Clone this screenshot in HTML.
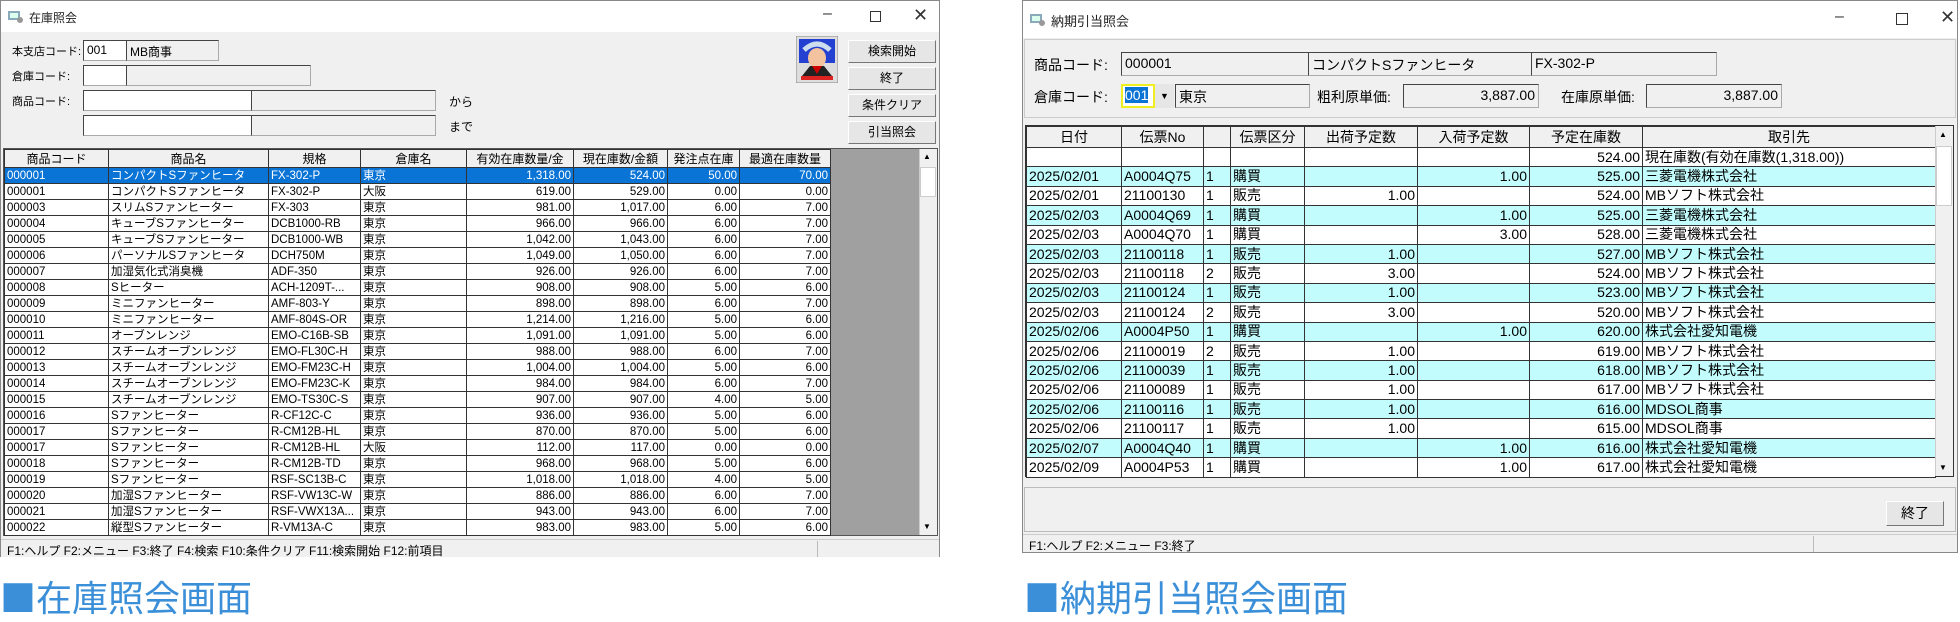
<!DOCTYPE html>
<html><head><meta charset="utf-8"><style>
*{box-sizing:border-box;margin:0;padding:0}
body{width:1960px;height:616px;background:#fff;position:relative;overflow:hidden;font-family:"Liberation Sans","Noto Sans CJK JP",sans-serif;color:#000}
.a{position:absolute}
.win{position:absolute;background:#f0f0f0;border:1px solid #888}
.tb{position:absolute;left:0;right:0;top:0;background:#fff}
.tt{position:absolute;font-size:12px;color:#222}
.ctl{position:absolute;font-size:16px;color:#333}
.box{position:absolute;border:1px solid #444;border-right-color:#aaa;border-bottom-color:#aaa;background:#f0f0f0;font-size:12px;padding:2px 3px;white-space:nowrap;overflow:hidden}
.w{background:#fff}
.lbl{position:absolute;font-size:12px;white-space:nowrap}
.btn{position:absolute;background:#e6e6e6;border:1px solid #fff;border-right-color:#777;border-bottom-color:#777;font-size:12px;text-align:center;line-height:21px}
table{border-collapse:collapse;table-layout:fixed;position:absolute}
td{border:1px solid #333;white-space:nowrap;overflow:hidden;padding:0 2px}
.g1 td{font-size:11.5px;height:16px;line-height:14px}
.g2 td{font-size:14px;height:19.4px;line-height:17px}
th{border:1px solid #333;font-weight:normal;background:#f0f0f0;white-space:nowrap;overflow:hidden}
.g1 th{font-size:12px;height:18px}
.g2 th{font-size:14px;height:20px}
.r{text-align:right}
.sel td{background:#0a74d6;color:#fff}
.cy td{background:#c2fcfc}
.sb{position:absolute;background:#f0f0f0;border-left:1px solid #ccc}
.st{position:absolute;font-size:12px;border-top:1px solid #ccc;background:#f0f0f0;padding:2px 6px}
.h{position:absolute;font-size:36px;color:#3a8fd8;font-family:"Noto Sans CJK JP",sans-serif;line-height:38px}
</style></head><body>

<!-- LEFT WINDOW -->
<div class="win" style="left:0;top:0;width:940px;height:557px">
 <div class="tb" style="height:31px"></div>
 <svg class="a" style="left:7px;top:9px" width="16" height="14"><rect x="0" y="1" width="12" height="9" fill="#8ab" /><rect x="2" y="3" width="8" height="5" fill="#dfe"/><circle cx="12" cy="10" r="3" fill="#999"/></svg>
 <div class="tt" style="left:28px;top:8px">在庫照会</div>
 <div class="ctl" style="left:822px;top:4px">–</div>
 <div class="a" style="left:869px;top:10px;width:11px;height:11px;border:1px solid #333"></div>
 <div class="ctl" style="left:912px;top:4px;font-size:18px">✕</div>

 <div class="lbl" style="left:11px;top:42px;font-size:11px">本支店コード:</div>
 <div class="box w" style="left:82px;top:39px;width:44px;height:21px">001</div>
 <div class="box" style="left:125px;top:39px;width:93px;height:21px">MB商事</div>
 <div class="lbl" style="left:11px;top:67px;font-size:11px">倉庫コード:</div>
 <div class="box w" style="left:82px;top:64px;width:44px;height:21px"></div>
 <div class="box" style="left:125px;top:64px;width:185px;height:21px"></div>
 <div class="lbl" style="left:11px;top:92px;font-size:11px">商品コード:</div>
 <div class="box w" style="left:82px;top:89px;width:169px;height:21px"></div>
 <div class="box" style="left:250px;top:89px;width:185px;height:21px"></div>
 <div class="box w" style="left:82px;top:114px;width:169px;height:21px"></div>
 <div class="box" style="left:250px;top:114px;width:185px;height:21px"></div>
 <div class="lbl" style="left:448px;top:92px">から</div>
 <div class="lbl" style="left:448px;top:117px">まで</div>

 <svg class="a" style="left:795px;top:35px" width="42" height="47"><rect x="0" y="0" width="42" height="47" fill="#ddd" stroke="#888"/><rect x="3" y="3" width="36" height="24" fill="#2340d0"/><ellipse cx="21" cy="22" rx="9" ry="10" fill="#f3c3a0"/><path d="M8 14 Q21 2 34 14" stroke="#cde" stroke-width="5" fill="none"/><path d="M6 40 L14 30 L28 30 L36 40 Z" fill="#222"/><path d="M16 30 L21 38 L26 30Z" fill="#c00"/><rect x="5" y="40" width="32" height="4" fill="#d22"/></svg>
 <div class="btn" style="left:847px;top:39px;width:88px;height:23px">検索開始</div>
 <div class="btn" style="left:847px;top:66px;width:88px;height:23px">終了</div>
 <div class="btn" style="left:847px;top:93px;width:88px;height:23px">条件クリア</div>
 <div class="btn" style="left:847px;top:120px;width:88px;height:23px">引当照会</div>

 <div class="a" style="left:2px;top:147px;width:935px;height:388px;background:#a0a0a0;border:1px solid #555"></div>
 <table class="g1" style="left:3px;top:148px;width:826px;background:#fff">
  <colgroup><col style="width:104px"><col style="width:160px"><col style="width:92px"><col style="width:106px"><col style="width:107px"><col style="width:94px"><col style="width:72px"><col style="width:91px"></colgroup>
  <tr><th>商品コード</th><th>商品名</th><th>規格</th><th>倉庫名</th><th>有効在庫数量/金</th><th>現在庫数/金額</th><th>発注点在庫</th><th>最適在庫数量</th></tr>
  <tr class="sel"><td>000001</td><td>コンパクトSファンヒータ</td><td>FX-302-P</td><td>東京</td><td class="r">1,318.00</td><td class="r">524.00</td><td class="r">50.00</td><td class="r">70.00</td></tr>
  <tr><td>000001</td><td>コンパクトSファンヒータ</td><td>FX-302-P</td><td>大阪</td><td class="r">619.00</td><td class="r">529.00</td><td class="r">0.00</td><td class="r">0.00</td></tr>
  <tr><td>000003</td><td>スリムSファンヒーター</td><td>FX-303</td><td>東京</td><td class="r">981.00</td><td class="r">1,017.00</td><td class="r">6.00</td><td class="r">7.00</td></tr>
  <tr><td>000004</td><td>キューブSファンヒーター</td><td>DCB1000-RB</td><td>東京</td><td class="r">966.00</td><td class="r">966.00</td><td class="r">6.00</td><td class="r">7.00</td></tr>
  <tr><td>000005</td><td>キューブSファンヒーター</td><td>DCB1000-WB</td><td>東京</td><td class="r">1,042.00</td><td class="r">1,043.00</td><td class="r">6.00</td><td class="r">7.00</td></tr>
  <tr><td>000006</td><td>パーソナルSファンヒータ</td><td>DCH750M</td><td>東京</td><td class="r">1,049.00</td><td class="r">1,050.00</td><td class="r">6.00</td><td class="r">7.00</td></tr>
  <tr><td>000007</td><td>加湿気化式消臭機</td><td>ADF-350</td><td>東京</td><td class="r">926.00</td><td class="r">926.00</td><td class="r">6.00</td><td class="r">7.00</td></tr>
  <tr><td>000008</td><td>Sヒーター</td><td>ACH-1209T-...</td><td>東京</td><td class="r">908.00</td><td class="r">908.00</td><td class="r">5.00</td><td class="r">6.00</td></tr>
  <tr><td>000009</td><td>ミニファンヒーター</td><td>AMF-803-Y</td><td>東京</td><td class="r">898.00</td><td class="r">898.00</td><td class="r">6.00</td><td class="r">7.00</td></tr>
  <tr><td>000010</td><td>ミニファンヒーター</td><td>AMF-804S-OR</td><td>東京</td><td class="r">1,214.00</td><td class="r">1,216.00</td><td class="r">5.00</td><td class="r">6.00</td></tr>
  <tr><td>000011</td><td>オーブンレンジ</td><td>EMO-C16B-SB</td><td>東京</td><td class="r">1,091.00</td><td class="r">1,091.00</td><td class="r">5.00</td><td class="r">6.00</td></tr>
  <tr><td>000012</td><td>スチームオーブンレンジ</td><td>EMO-FL30C-H</td><td>東京</td><td class="r">988.00</td><td class="r">988.00</td><td class="r">6.00</td><td class="r">7.00</td></tr>
  <tr><td>000013</td><td>スチームオーブンレンジ</td><td>EMO-FM23C-H</td><td>東京</td><td class="r">1,004.00</td><td class="r">1,004.00</td><td class="r">5.00</td><td class="r">6.00</td></tr>
  <tr><td>000014</td><td>スチームオーブンレンジ</td><td>EMO-FM23C-K</td><td>東京</td><td class="r">984.00</td><td class="r">984.00</td><td class="r">6.00</td><td class="r">7.00</td></tr>
  <tr><td>000015</td><td>スチームオーブンレンジ</td><td>EMO-TS30C-S</td><td>東京</td><td class="r">907.00</td><td class="r">907.00</td><td class="r">4.00</td><td class="r">5.00</td></tr>
  <tr><td>000016</td><td>Sファンヒーター</td><td>R-CF12C-C</td><td>東京</td><td class="r">936.00</td><td class="r">936.00</td><td class="r">5.00</td><td class="r">6.00</td></tr>
  <tr><td>000017</td><td>Sファンヒーター</td><td>R-CM12B-HL</td><td>東京</td><td class="r">870.00</td><td class="r">870.00</td><td class="r">5.00</td><td class="r">6.00</td></tr>
  <tr><td>000017</td><td>Sファンヒーター</td><td>R-CM12B-HL</td><td>大阪</td><td class="r">112.00</td><td class="r">117.00</td><td class="r">0.00</td><td class="r">0.00</td></tr>
  <tr><td>000018</td><td>Sファンヒーター</td><td>R-CM12B-TD</td><td>東京</td><td class="r">968.00</td><td class="r">968.00</td><td class="r">5.00</td><td class="r">6.00</td></tr>
  <tr><td>000019</td><td>Sファンヒーター</td><td>RSF-SC13B-C</td><td>東京</td><td class="r">1,018.00</td><td class="r">1,018.00</td><td class="r">4.00</td><td class="r">5.00</td></tr>
  <tr><td>000020</td><td>加湿Sファンヒーター</td><td>RSF-VW13C-W</td><td>東京</td><td class="r">886.00</td><td class="r">886.00</td><td class="r">6.00</td><td class="r">7.00</td></tr>
  <tr><td>000021</td><td>加湿Sファンヒーター</td><td>RSF-VWX13A...</td><td>東京</td><td class="r">943.00</td><td class="r">943.00</td><td class="r">6.00</td><td class="r">7.00</td></tr>
  <tr><td>000022</td><td>縦型Sファンヒーター</td><td>R-VM13A-C</td><td>東京</td><td class="r">983.00</td><td class="r">983.00</td><td class="r">5.00</td><td class="r">6.00</td></tr>
 </table>
 <div class="sb" style="left:918px;top:148px;width:18px;height:386px"></div>
 <div class="a" style="left:922px;top:151px;font-size:8px">▲</div>
 <div class="a" style="left:919px;top:166px;width:16px;height:30px;background:#fff;border:1px solid #ccc"></div>
 <div class="a" style="left:922px;top:521px;font-size:8px">▼</div>
 <div class="st" style="left:0;top:538px;width:938px;height:18px">F1:ヘルプ F2:メニュー F3:終了 F4:検索 F10:条件クリア F11:検索開始 F12:前項目</div>
 <div class="a" style="left:816px;top:540px;width:1px;height:16px;background:#bbb"></div>
</div>
<div class="h" style="left:0;top:577px">■在庫照会画面</div>

<!-- RIGHT WINDOW -->
<div class="win" style="left:1022px;top:0;width:936px;height:553px">
 <div class="tb" style="height:37px"></div>
 <svg class="a" style="left:7px;top:12px" width="16" height="14"><rect x="0" y="1" width="12" height="9" fill="#8ab" /><rect x="2" y="3" width="8" height="5" fill="#dfe"/><circle cx="12" cy="10" r="3" fill="#999"/></svg>
 <div class="tt" style="left:28px;top:10px;font-size:13px">納期引当照会</div>
 <div class="ctl" style="left:812px;top:7px">–</div>
 <div class="a" style="left:873px;top:12px;width:12px;height:12px;border:1px solid #333"></div>
 <div class="ctl" style="left:917px;top:6px;font-size:18px">✕</div>

 <div class="a" style="left:1px;top:38px;width:932px;height:79px;border:1px solid #ccc"></div>
 <div class="lbl" style="left:11px;top:54px;font-size:14px">商品コード:</div>
 <div class="box" style="left:98px;top:51px;width:188px;height:24px;font-size:14px">000001</div>
 <div class="box" style="left:285px;top:51px;width:224px;height:24px;font-size:14px">コンパクトSファンヒータ</div>
 <div class="box" style="left:508px;top:51px;width:186px;height:24px;font-size:14px">FX-302-P</div>
 <div class="lbl" style="left:11px;top:86px;font-size:14px">倉庫コード:</div>
 <div class="a" style="left:98px;top:83px;width:34px;height:24px;border:2px solid #ee2;background:#fff;font-size:14px;padding:1px 2px"><span style="background:#0a74d6;color:#fff">001</span></div>
 <div class="a" style="left:132px;top:83px;width:19px;height:24px;background:#e6e6e6;font-size:9px;text-align:center;line-height:24px">▼</div>
 <div class="box" style="left:152px;top:83px;width:135px;height:24px;font-size:14px">東京</div>
 <div class="lbl" style="left:294px;top:86px;font-size:14px">粗利原単価:</div>
 <div class="box r" style="left:380px;top:83px;width:136px;height:24px;font-size:14px">3,887.00</div>
 <div class="lbl" style="left:538px;top:86px;font-size:14px">在庫原単価:</div>
 <div class="box r" style="left:623px;top:83px;width:136px;height:24px;font-size:14px">3,887.00</div>

 <div class="a" style="left:2px;top:124px;width:929px;height:352px;background:#fff;border:1px solid #333"></div>
 <table class="g2" style="left:3px;top:125px;width:909px;background:#fff">
  <colgroup><col style="width:95px"><col style="width:82px"><col style="width:27px"><col style="width:74px"><col style="width:113px"><col style="width:112px"><col style="width:113px"><col style="width:293px"></colgroup>
  <tr><th>日付</th><th>伝票No</th><th></th><th>伝票区分</th><th>出荷予定数</th><th>入荷予定数</th><th>予定在庫数</th><th>取引先</th></tr>
  <tr><td></td><td></td><td></td><td></td><td></td><td></td><td class="r">524.00</td><td>現在庫数(有効在庫数(1,318.00))</td></tr>
  <tr class="cy"><td>2025/02/01</td><td>A0004Q75</td><td>1</td><td>購買</td><td></td><td class="r">1.00</td><td class="r">525.00</td><td>三菱電機株式会社</td></tr>
  <tr><td>2025/02/01</td><td>21100130</td><td>1</td><td>販売</td><td class="r">1.00</td><td></td><td class="r">524.00</td><td>MBソフト株式会社</td></tr>
  <tr class="cy"><td>2025/02/03</td><td>A0004Q69</td><td>1</td><td>購買</td><td></td><td class="r">1.00</td><td class="r">525.00</td><td>三菱電機株式会社</td></tr>
  <tr><td>2025/02/03</td><td>A0004Q70</td><td>1</td><td>購買</td><td></td><td class="r">3.00</td><td class="r">528.00</td><td>三菱電機株式会社</td></tr>
  <tr class="cy"><td>2025/02/03</td><td>21100118</td><td>1</td><td>販売</td><td class="r">1.00</td><td></td><td class="r">527.00</td><td>MBソフト株式会社</td></tr>
  <tr><td>2025/02/03</td><td>21100118</td><td>2</td><td>販売</td><td class="r">3.00</td><td></td><td class="r">524.00</td><td>MBソフト株式会社</td></tr>
  <tr class="cy"><td>2025/02/03</td><td>21100124</td><td>1</td><td>販売</td><td class="r">1.00</td><td></td><td class="r">523.00</td><td>MBソフト株式会社</td></tr>
  <tr><td>2025/02/03</td><td>21100124</td><td>2</td><td>販売</td><td class="r">3.00</td><td></td><td class="r">520.00</td><td>MBソフト株式会社</td></tr>
  <tr class="cy"><td>2025/02/06</td><td>A0004P50</td><td>1</td><td>購買</td><td></td><td class="r">1.00</td><td class="r">620.00</td><td>株式会社愛知電機</td></tr>
  <tr><td>2025/02/06</td><td>21100019</td><td>2</td><td>販売</td><td class="r">1.00</td><td></td><td class="r">619.00</td><td>MBソフト株式会社</td></tr>
  <tr class="cy"><td>2025/02/06</td><td>21100039</td><td>1</td><td>販売</td><td class="r">1.00</td><td></td><td class="r">618.00</td><td>MBソフト株式会社</td></tr>
  <tr><td>2025/02/06</td><td>21100089</td><td>1</td><td>販売</td><td class="r">1.00</td><td></td><td class="r">617.00</td><td>MBソフト株式会社</td></tr>
  <tr class="cy"><td>2025/02/06</td><td>21100116</td><td>1</td><td>販売</td><td class="r">1.00</td><td></td><td class="r">616.00</td><td>MDSOL商事</td></tr>
  <tr><td>2025/02/06</td><td>21100117</td><td>1</td><td>販売</td><td class="r">1.00</td><td></td><td class="r">615.00</td><td>MDSOL商事</td></tr>
  <tr class="cy"><td>2025/02/07</td><td>A0004Q40</td><td>1</td><td>購買</td><td></td><td class="r">1.00</td><td class="r">616.00</td><td>株式会社愛知電機</td></tr>
  <tr><td>2025/02/09</td><td>A0004P53</td><td>1</td><td>購買</td><td></td><td class="r">1.00</td><td class="r">617.00</td><td>株式会社愛知電機</td></tr>
 </table>
 <div class="sb" style="left:912px;top:125px;width:18px;height:350px"></div>
 <div class="a" style="left:916px;top:129px;font-size:8px">▲</div>
 <div class="a" style="left:913px;top:145px;width:16px;height:60px;background:#fff;border:1px solid #ccc"></div>
 <div class="a" style="left:916px;top:462px;font-size:8px">▼</div>

 <div class="a" style="left:1px;top:486px;width:932px;height:45px;border:1px solid #bbb"></div>
 <div class="btn" style="left:863px;top:500px;width:58px;height:25px;line-height:23px;font-size:14px">終了</div>
 <div class="st" style="left:0;top:533px;width:934px;height:18px;font-size:12px">F1:ヘルプ F2:メニュー F3:終了</div>
 <div class="a" style="left:790px;top:535px;width:1px;height:16px;background:#bbb"></div>
</div>
<div class="h" style="left:1024px;top:577px">■納期引当照会画面</div>
</body></html>
